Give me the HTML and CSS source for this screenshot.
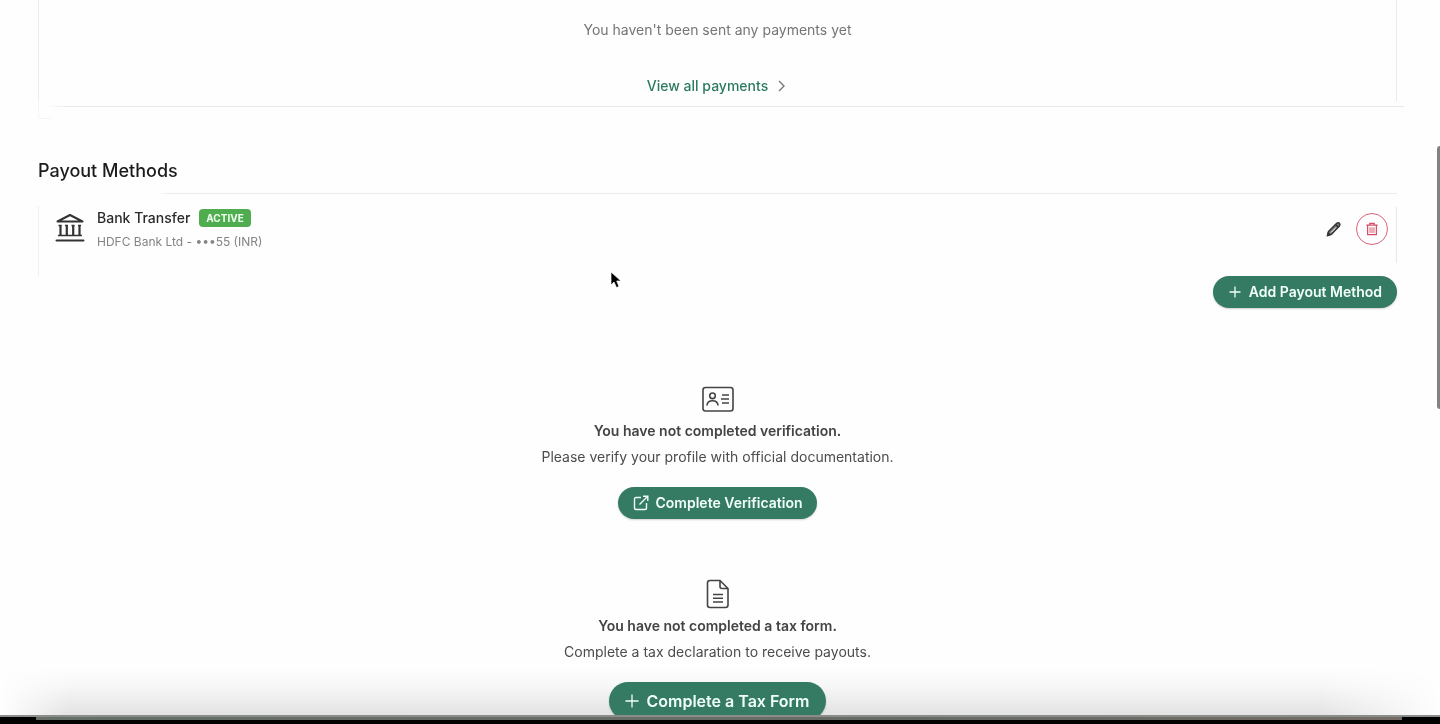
FILE: index.html
```html
<!DOCTYPE html>
<html lang="en">
<head>
<meta charset="utf-8">
<meta name="viewport" content="width=device-width, initial-scale=1">
<title>Payout Methods</title>
<link rel="stylesheet" href="styles.css">
</head>
<body>
<main class="page">
  <section class="payments">
    <p class="payments-empty">You haven't been sent any payments yet</p>
    <a class="payments-link" href="#payments">View all payments
      <svg class="chevron" viewBox="0 0 12 12" aria-hidden="true"><path d="M3 1l5 5-5 5" fill="none" stroke="currentColor" stroke-width="1.4"/></svg>
    </a>
  </section>

  <section class="methods">
    <h2 class="heading">Payout Methods</h2>
    <div class="method">
      <svg class="bank" viewBox="0 0 30 32" aria-hidden="true">
        <path d="M2.500 10.500L15 4l12.500 6.500z" fill="none" stroke="currentColor" stroke-width="2" stroke-linejoin="round"/>
        <path d="M5.500 14v10M11.800 14v10M18.200 14v10M24.500 14v10" fill="none" stroke="currentColor" stroke-width="2.200"/>
        <path d="M3.500 14.500h3M10 14.500h3M16.500 14.500h3M23 14.500h3M3 24.500h24" fill="none" stroke="currentColor" stroke-width="1.500"/>
        <path d="M1.500 29.500h27" fill="none" stroke="currentColor" stroke-width="2" stroke-linecap="round"/>
      </svg>
      <div class="method-text">
        <div class="method-title">Bank Transfer <span class="badge">ACTIVE</span></div>
        <div class="method-detail">HDFC Bank Ltd - •••55 (INR)</div>
      </div>
      <div class="method-actions">
        <button class="edit" type="button" aria-label="Edit">
          <svg viewBox="0 0 16 16" aria-hidden="true"><path d="M1.500 14.500l1-4L10.700 2.300q1.500-1.300 2.700 0t0 2.800L5.500 13.300z" fill="#777" stroke="currentColor" stroke-width="1.400" stroke-linejoin="round"/><path d="M9.500 3.500l3 3M1.500 14.500l.7-2.500 1.700 1.700z" fill="currentColor" stroke="currentColor" stroke-width="1.300"/><path d="M5 11.500l5-5" stroke="#fff" stroke-width="1"/></svg>
        </button>
        <button class="delete" type="button" aria-label="Delete">
          <svg viewBox="0 0 16 16" fill="none" stroke="currentColor" aria-hidden="true"><path d="M1.500 3.500h13M5.500 3V1.500h5V3M3 4v10.500h10V4" stroke-width="1.400"/><path d="M5.800 6v6.500M8 6v6.500M10.200 6v6.500" stroke-width="1"/></svg>
        </button>
      </div>
    </div>
    <button class="pill" type="button">
      <svg viewBox="0 0 14 14" aria-hidden="true"><path d="M7 1.500v11M1.500 7h11" stroke="currentColor" stroke-width="1.300"/></svg>
      Add Payout Method
    </button>
  </section>

  <section class="notice">
    <svg class="notice-icon" viewBox="0 0 32 32" fill="none" stroke="currentColor" stroke-width="1.600" aria-hidden="true">
      <rect x="1" y="4.500" width="30" height="23.500" rx="2.500"/>
      <circle cx="10.500" cy="12.800" r="2.800"/>
      <path d="M5 22.500c.3-3.500 2.300-4.700 5.500-4.700s5.200 1.200 5.500 4.700M20 12h7M19 16h8M20 20h7"/>
    </svg>
    <h3 class="notice-title">You have not completed verification.</h3>
    <p class="notice-text">Please verify your profile with official documentation.</p>
    <button class="pill" type="button">
      <svg class="external" viewBox="0 0 16 16" fill="none" stroke="currentColor" stroke-width="1.400" aria-hidden="true"><path d="M8 2.500H3Q1.500 2.500 1.500 4v9q0 1.500 1.500 1.500h9q1.500 0 1.500-1.500V8M6.500 9.500l8-8M10 1.200h4.800V6"/></svg>
      Complete Verification
    </button>
  </section>

  <section class="notice">
    <svg class="notice-icon" viewBox="0 0 32 32" fill="none" stroke="currentColor" stroke-width="1.600" aria-hidden="true">
      <path d="M18 2.500H8Q5.500 2.500 5.500 5v22q0 2.500 2.500 2.500h15.500Q26 29.500 26 27V10.500zV8.500Q18 10.500 20 10.500h6M11 16.500h10M11 20.300h10M11 24h10"/>
    </svg>
    <h3 class="notice-title">You have not completed a tax form.</h3>
    <p class="notice-text">Complete a tax declaration to receive payouts.</p>
    <button class="pill pill-large" type="button">
      <svg viewBox="0 0 14 14" aria-hidden="true"><path d="M7 .5v13M.5 7h13" stroke="currentColor" stroke-width="1.300"/></svg>
      Complete a Tax Form
    </button>
  </section>
</main>
<div class="scrollbar" aria-hidden="true"></div>
<div class="shade" aria-hidden="true"></div>
<div class="frame" aria-hidden="true"></div>
<svg class="cursor" viewBox="0 0 12 18" aria-hidden="true"><path d="M1 1v13l3-3 2.500 5.500 2.500-1L6.700 10H11z" fill="#000" stroke="#fff" stroke-width=".7"/></svg>
</body>
</html>
```
FILE: styles.css
```css
* { box-sizing: border-box; }
body {
  margin: 0;
  height: 100vh;
  overflow: hidden;
  background: #fefefe;
  color: #2b2b2b;
  font: 14px/20px Inter, "Liberation Sans", sans-serif;
}
h2, h3, p { margin: 0; }
button { font: inherit; cursor: pointer; }
.page { padding: 0 43px 0 38px; }

.payments {
  position: relative;
  display: flex;
  flex-direction: column;
  align-items: center;
  gap: 36px;
  padding: 20px 0 11px;
  background:
    linear-gradient(#ebebeb, #ebebeb) left top / 1px 101px no-repeat,
    linear-gradient(#ebebeb, #ebebeb) right top / 1px 101px no-repeat;
}
.payments::before {
  content: "";
  position: absolute;
  left: 10px;
  right: -7px;
  bottom: 0;
  height: 1px;
  background: linear-gradient(90deg, #fefefe, #e8e8e8 20px);
}
.payments::after {
  content: "";
  position: absolute;
  left: 0;
  bottom: -12px;
  width: 12px;
  height: 18px;
  border: solid #f4f4f4;
  border-width: 0 0 1px 1px;
  border-radius: 0 0 0 4px;
}
.payments-empty { color: #757575; }
.payments-link {
  display: flex;
  align-items: center;
  gap: 8px;
  color: #2c7a60;
  font-weight: 500;
  text-decoration: none;
}
.chevron { width: 12px; height: 12px; color: #777; }

.methods {
  display: flex;
  flex-direction: column;
  padding-top: 52px;
}
.heading { font-size: 18px; line-height: 24px; font-weight: 500; color: #1c1c1c; }
.method {
  display: flex;
  align-items: flex-start;
  gap: 12px;
  margin-top: 10px;
  padding: 15px 9px 24px 17px;
  background:
    linear-gradient(90deg, transparent 120px, #ececec 130px) left top / 100% 1px no-repeat,
    linear-gradient(#f0f0f0, #f0f0f0) left bottom / 1px 70px no-repeat,
    linear-gradient(transparent 14px, #e8e8e8 14px, #e8e8e8 70px, transparent 70px) right top / 1px 100% no-repeat;
}
.bank { width: 30px; height: 32px; margin-top: 3px; color: #333; }
.method-text { display: flex; flex-direction: column; gap: 4px; }
.method-title { display: flex; align-items: center; gap: 9px; font-weight: 500; }
.badge {
  padding: 0 7px;
  border-radius: 4px;
  background: #4fad50;
  color: #f0fff0;
  font-size: 10px;
  line-height: 18px;
  font-weight: 700;
}
.method-detail { color: #848484; font-size: 12px; }
.method-actions {
  display: flex;
  align-items: center;
  gap: 14px;
  margin: 5px 0 0 auto;
}
.edit, .delete { display: flex; align-items: center; justify-content: center; padding: 0; background: none; }
.edit { border: 0; color: #333; }
.edit svg { width: 16px; height: 16px; }
.delete { width: 32px; height: 32px; border: 1px solid #d9627a; border-radius: 50%; color: #d44c66; }
.delete svg { width: 14px; height: 14px; }

.pill {
  display: flex;
  align-items: center;
  gap: 7px;
  padding: 6px 15px;
  border: 0;
  border-radius: 17px;
  background: #357b63;
  box-shadow: 0 1px 2px #00000030;
  color: #f1fff9;
  font-size: 14px;
  line-height: 20px;
  font-weight: 600;
}
.pill svg { width: 14px; height: 14px; }
.pill .external { width: 16px; height: 16px; }
.pill-large { padding: 9px 16px; border-radius: 20px; font-size: 16px; }
.methods .pill { align-self: flex-end; }

.notice {
  display: flex;
  flex-direction: column;
  align-items: center;
}
.methods + .notice { margin-top: 75px; }
.notice + .notice { margin-top: 59px; }
.notice-icon { width: 32px; height: 32px; color: #444; }
.notice-title { margin-top: 6px; font-size: 14px; line-height: 20px; font-weight: 600; color: #444; }
.notice-text { margin: 6px 0 20px; color: #4c4c4c; }

.scrollbar {
  position: fixed;
  top: 146px;
  right: 0;
  width: 3px;
  height: 263px;
  border-radius: 3px 0 0 3px;
  background: #828282;
}
.shade {
  position: fixed;
  z-index: -1;
  left: 0;
  right: 0;
  bottom: 8px;
  height: 48px;
  background: linear-gradient(transparent, #00000008 40%, #0000001c);
  mask-image: linear-gradient(90deg, transparent, #000 70px, #000 calc(100% - 120px), transparent);
}
.frame {
  position: fixed;
  left: 0;
  right: 0;
  bottom: 0;
  height: 9px;
  border-top: 2px solid #8a8d89;
  background: linear-gradient(90deg, #667068, #676b66 65%, #746d65) 36px 0 / calc(100% - 74px) 3px no-repeat #000;
}
.cursor { position: fixed; left: 610px; top: 271px; width: 12px; height: 18px; }
```
